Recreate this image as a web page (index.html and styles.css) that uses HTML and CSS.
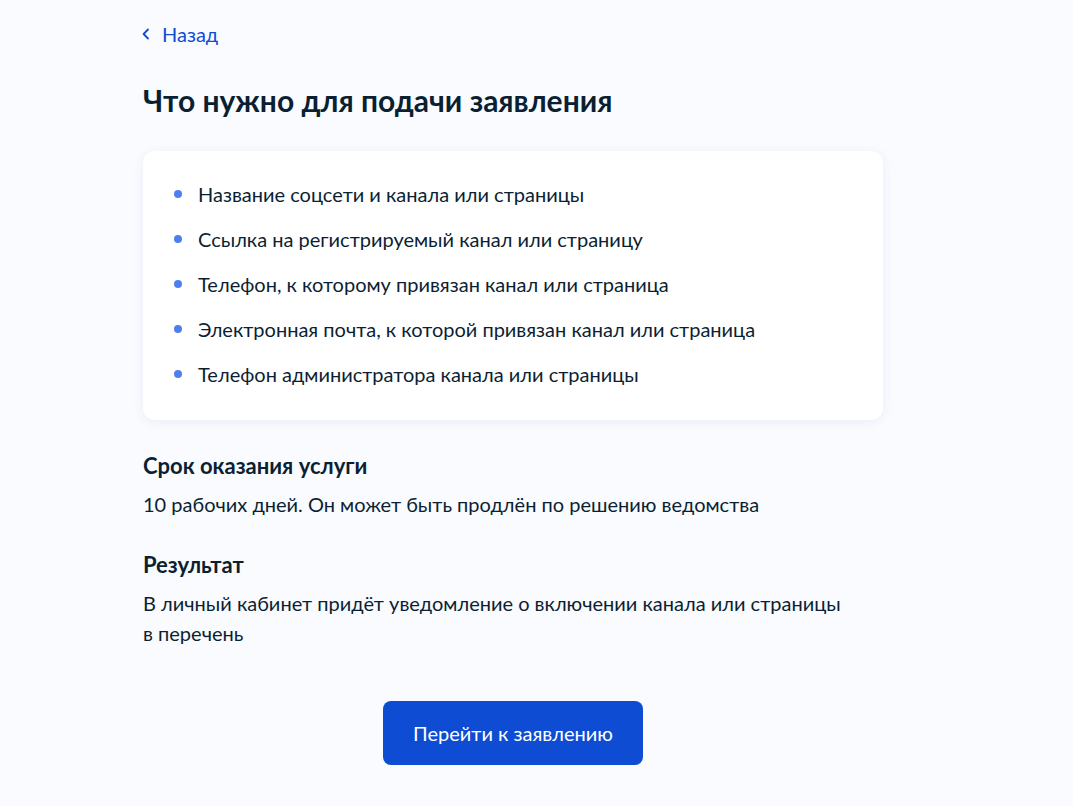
FILE: index.html
```html
<!DOCTYPE html>
<html lang="ru">
<head>
    <meta charset="UTF-8">
    <meta name="viewport" content="width=device-width, initial-scale=1.0">
    <title>Что нужно для подачи заявления</title>
    <link rel="stylesheet" href="styles.css">
</head>
<body>
    <main class="page">
        <a class="back-link" href="#">
            <svg class="back-icon" width="8" height="12" viewBox="0 0 8 12" fill="none">
                <path d="M6 1.5L1.6 6L6 10.5" stroke="#0d4cd3" stroke-width="1.8" stroke-linecap="round" stroke-linejoin="round"/>
            </svg>
            <span>Назад</span>
        </a>

        <h1 class="title">Что нужно для подачи заявления</h1>

        <div class="card">
            <ul class="list">
                <li>Название соцсети и канала или страницы</li>
                <li>Ссылка на регистрируемый канал или страницу</li>
                <li>Телефон, к которому привязан канал или страница</li>
                <li>Электронная почта, к которой привязан канал или страница</li>
                <li>Телефон администратора канала или страницы</li>
            </ul>
        </div>

        <h3 class="subtitle">Срок оказания услуги</h3>
        <p class="text">10 рабочих дней. Он может быть продлён по решению ведомства</p>

        <h3 class="subtitle">Результат</h3>
        <p class="text">В личный кабинет придёт уведомление о включении канала или страницы в&nbsp;перечень</p>

        <div class="actions">
            <button class="btn" type="button">Перейти к заявлению</button>
        </div>
    </main>
</body>
</html>
```

FILE: styles.css
```css
body {
    font-family: 'Lato', 'Noto Sans', sans-serif;
    color: #0b1f33;
    background-color: #f9fbfe;
    margin: 0;
    padding: 0;
}

.page {
    width: 740px;
    margin-left: 143px;
    padding-top: 20px;
}

.back-link {
    display: inline-flex;
    align-items: center;
    gap: 12px;
    font-size: 20px;
    line-height: 28px;
    color: #0d4cd3;
    text-decoration: none;
}

.back-icon {
    display: block;
    margin-left: -1px;
}

.title {
    font-size: 30px;
    line-height: 36px;
    font-weight: 700;
    margin: 34px 0 33px;
}

.card {
    background-color: #ffffff;
    border-radius: 12px;
    box-shadow: 0 2px 12px rgba(0, 50, 160, 0.07);
    padding: 28px 32px 31px 31px;
}

.list {
    list-style: none;
    margin: 0;
    padding: 0;
}

.list li {
    position: relative;
    padding-left: 24px;
    font-size: 20px;
    line-height: 30px;
}

.list li + li {
    margin-top: 15px;
}

.list li::before {
    content: "";
    position: absolute;
    left: 0;
    top: 11px;
    width: 8px;
    height: 8px;
    border-radius: 50%;
    background-color: #4d80ee;
}

.subtitle {
    font-size: 22px;
    line-height: 30px;
    font-weight: 700;
    margin: 31px 0 0;
}

.text {
    font-size: 20px;
    line-height: 30px;
    margin: 8px 0 0;
}

.actions {
    display: flex;
    justify-content: center;
    margin-top: 53px;
    padding-bottom: 40px;
}

.btn {
    font-family: inherit;
    font-size: 20px;
    color: #ffffff;
    background-color: #0d4cd3;
    border: none;
    border-radius: 8px;
    height: 64px;
    padding: 0 30px;
    cursor: pointer;
}
```
